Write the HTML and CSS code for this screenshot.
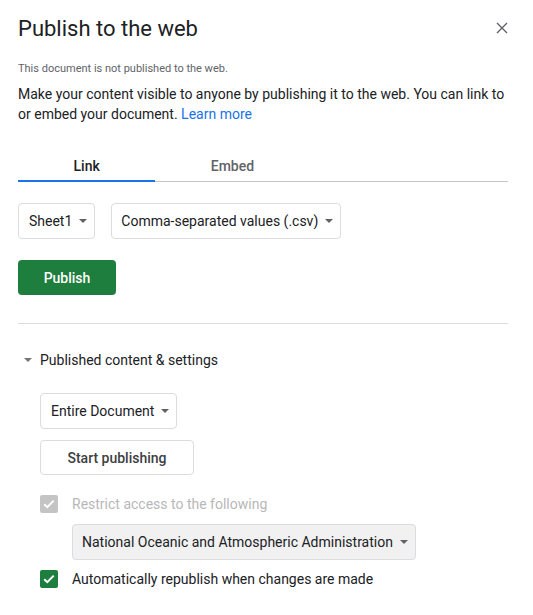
FILE: index.html
```html
<!DOCTYPE html>
<html>
<head>
<meta charset="utf-8">
<link rel="stylesheet" href="styles.css">
</head>
<body>
<div class="dialog">
  <div class="header">
    <h1 class="title">Publish to the web</h1>
    <button class="close" aria-label="Close">
      <svg width="12" height="12" viewBox="0 0 12 12"><path d="M1 1L11 11M11 1L1 11" stroke="#5f6368" stroke-width="1.4" fill="none"/></svg>
    </button>
  </div>
  <p class="status">This document is not published to the web.</p>
  <p class="intro">Make your content visible to anyone by publishing it to the web. You can link to or embed your document. <a class="link" href="#">Learn more</a></p>

  <div class="tabs">
    <div class="tab active">Link</div>
    <div class="tab">Embed</div>
  </div>

  <div class="row selects">
    <div class="select sheet">Sheet1<span class="caret"></span></div>
    <div class="select format">Comma-separated values (.csv)<span class="caret"></span></div>
  </div>

  <button class="btn-primary">Publish</button>

  <hr class="sep">

  <div class="section-head"><span class="caret small"></span>Published content &amp; settings</div>

  <div class="settings">
    <div class="select entire">Entire Document<span class="caret"></span></div>
    <button class="btn-secondary">Start publishing</button>

    <div class="check-row disabled">
      <span class="box grey"><svg width="18" height="18" viewBox="0 0 18 18"><path d="M4.2 9.2l3.1 3 6.4-6.6" stroke="#fff" stroke-width="2" fill="none"/></svg></span>
      <span>Restrict access to the following</span>
    </div>
    <div class="select domain">National Oceanic and Atmospheric Administration<span class="caret"></span></div>

    <div class="check-row">
      <span class="box green"><svg width="18" height="18" viewBox="0 0 18 18"><path d="M4.2 9.2l3.1 3 6.4-6.6" stroke="#fff" stroke-width="2" fill="none"/></svg></span>
      <span>Automatically republish when changes are made</span>
    </div>
  </div>
</div>
</body>
</html>
```
FILE: styles.css
```css
* { box-sizing: border-box; }
html, body { margin: 0; background: #fff; }
body { font-family: Roboto, "Noto Sans", Arial, sans-serif; color: #202124; }

.dialog { width: 533px; padding: 15px 25px 0 18px; }

.header { display: flex; justify-content: space-between; align-items: flex-start; }
.title { margin: 0; font-size: 22px; line-height: 28px; font-weight: 400; color: #202124; }
.close { border: 0; background: none; padding: 0; margin: 7px 0 0 0; width: 12px; height: 12px; display: block; }
.close svg { display: block; }

.status { margin: 19px 0 0; font-size: 11px; line-height: 14px; color: #5f6368; }
.intro { margin: 8px 0 0; font-size: 14px; line-height: 20px; color: #202124; }
.link { color: #1a73e8; text-decoration: none; }

.tabs { display: flex; margin-top: 28px; border-bottom: 1px solid #c4c7c5; }
.tab { padding: 0 55.5px; height: 29px; line-height: 28px; font-size: 14px; font-weight: 500; color: #5f6368; }
.tab.active { color: #202124; box-shadow: inset 0 -2px 0 #1a73e8; margin-bottom: -1px; height: 30px; }

.row { display: flex; }
.selects { margin-top: 21px; gap: 16px; }

.select { display: inline-flex; align-items: center; height: 36px; border: 1px solid #dadce0; border-radius: 4px; padding: 0 7px 0 10px; font-size: 14px; color: #202124; background: #fff; }
.caret { display: inline-block; width: 0; height: 0; border-left: 4px solid transparent; border-right: 4px solid transparent; border-top: 4px solid #5f6368; margin-left: 7px; }
.format { padding-left: 9px; }

.btn-primary { display: block; margin-top: 21px; width: 98px; height: 35px; border: 0; border-radius: 4px; background: #1e7e3d; color: #fff; font-family: Roboto, Arial, sans-serif; font-size: 14px; font-weight: 500; padding: 0; }

.sep { margin: 28px 0 0; border: 0; border-top: 1px solid #dadce0; height: 0; }

.section-head { display: flex; align-items: center; margin-top: 26px; font-size: 14px; line-height: 20px; color: #202124; padding-left: 6px; }
.section-head .caret { margin: 0 8px 0 0; border-top-color: #757575; }

.settings { padding-left: 22px; display: flex; flex-direction: column; align-items: flex-start; }
.entire { margin-top: 23px; }
.btn-secondary { margin-top: 11px; width: 154px; height: 35px; border: 1px solid #dadce0; border-radius: 4px; background: #fff; color: #3c4043; font-family: Roboto, Arial, sans-serif; font-size: 14px; font-weight: 500; padding: 0; }

.check-row { display: flex; align-items: center; gap: 14px; font-size: 14px; line-height: 18px; color: #202124; }
.check-row.disabled { margin-top: 20px; color: #b8b8b8; }
.box { width: 18px; height: 18px; border-radius: 2px; display: block; }
.box svg { display: block; }
.box.grey { background: #c4c4c4; }
.box.green { background: #1e7e3d; }

.domain { margin: 11px 0 0 32px; background: #f1f1f1; padding-left: 9px; }
.check-row:last-child { margin-top: 10px; }
```
